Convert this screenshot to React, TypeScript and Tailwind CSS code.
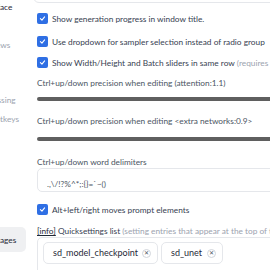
import React from "react";

function Check() {
  return (
    <div className="w-[11px] h-[11px] rounded-[2px] bg-[#2f6fe4] flex items-center justify-center shrink-0">
      <svg width="7" height="7" viewBox="0 0 10 10">
        <path d="M2 5.2 L4.2 7.2 L8 2.8" stroke="white" strokeWidth="1.6" fill="none" strokeLinecap="round" strokeLinejoin="round" />
      </svg>
    </div>
  );
}

function Chip({ label, w }: { label: string; w: string }) {
  return (
    <div className={`h-[22px] ${w} rounded-[5px] border border-[#e5e7eb] bg-white flex items-center pl-[9px] pr-[6px] justify-between shrink-0`}>
      <span className="text-[#1f2937] text-[9px]">{label}</span>
      <span className="w-[9px] h-[9px] rounded-full border border-[#d1d5db] flex items-center justify-center text-[6px] leading-none text-[#4b5563]">✕</span>
    </div>
  );
}

export default function App() {
  return (
    <div className="w-[270px] h-[270px] overflow-hidden bg-white flex font-['Lato',sans-serif] text-[8.3px] leading-[12px] text-[#374151]">
      <div className="w-[72px] ml-[-39px] shrink-0 flex flex-col *:shrink-0">
        <div className="mt-[1px] text-[#1f2937] whitespace-nowrap">User Interface</div>
        <div className="mt-[26px] text-[#9ca3af] whitespace-nowrap">Live previews</div>
        <div className="mt-[43px] text-[#9ca3af] whitespace-nowrap">Postprocessing</div>
        <div className="mt-[7px] text-[#9ca3af] whitespace-nowrap">Canvas Hotkeys</div>
        <div className="mt-[102px] w-[65px] h-[25px] rounded-[5px] bg-[#eff0f2] flex items-center pl-[2px] text-[#1f2937] whitespace-nowrap">Show all pages</div>
      </div>
      <div className="w-[300px] shrink-0 pl-[4px] flex flex-col whitespace-nowrap *:shrink-0">
        <div className="ml-[-4px] mt-[-17px] h-[20px] rounded-[6px] border border-[#e5e7eb]" />
        <div className="mt-[10px] flex items-center gap-[4px] h-[11px]">
          <Check />
          <span>Show generation progress in window title.</span>
        </div>
        <div className="mt-[12px] flex items-center gap-[4px] h-[11px]">
          <Check />
          <span>Use dropdown for sampler selection instead of radio group</span>
        </div>
        <div className="mt-[10px] flex items-center gap-[4px] h-[11px]">
          <Check />
          <span>
            Show Width/Height and Batch sliders in same row <span className="text-[#9ca3af]">(requires</span>
          </span>
        </div>
        <div className="mt-[9px] h-[12px] text-[#4b5563]">Ctrl+up/down precision when editing (attention:1.1)</div>
        <div className="mt-[8px] h-[4px] rounded-full bg-[#5f5f5f]" />
        <div className="mt-[14px] h-[12px] text-[#4b5563]">Ctrl+up/down precision when editing &lt;extra networks:0.9&gt;</div>
        <div className="mt-[10px] h-[4px] rounded-full bg-[#5f5f5f]" />
        <div className="mt-[15px] h-[12px] text-[#4b5563]">Ctrl+up/down word delimiters</div>
        <div className="h-[24px] rounded-[5px] border border-[#e5e7eb] pl-[9px] pt-[9px] text-[#4b5563]">.,\/!?%^*;:{"{}"}=`~()</div>
        <div className="mt-[12px] flex items-center gap-[4px] h-[11px]">
          <Check />
          <span>Alt+left/right moves prompt elements</span>
        </div>
        <div className="mt-[10px] h-[12px]">
          <span className="underline text-[#1f2937]">[info]</span> Quicksettings list{" "}
          <span className="text-[#9ca3af]">(setting entries that appear at the top of the page)</span>
        </div>
        <div className="h-[40px] rounded-[5px] border border-[#e5e7eb] pl-[5px] pt-[4px] flex gap-[3px]">
          <Chip label="sd_model_checkpoint" w="w-[115px]" />
          <Chip label="sd_unet" w="w-[62px]" />
        </div>
      </div>
    </div>
  );
}
